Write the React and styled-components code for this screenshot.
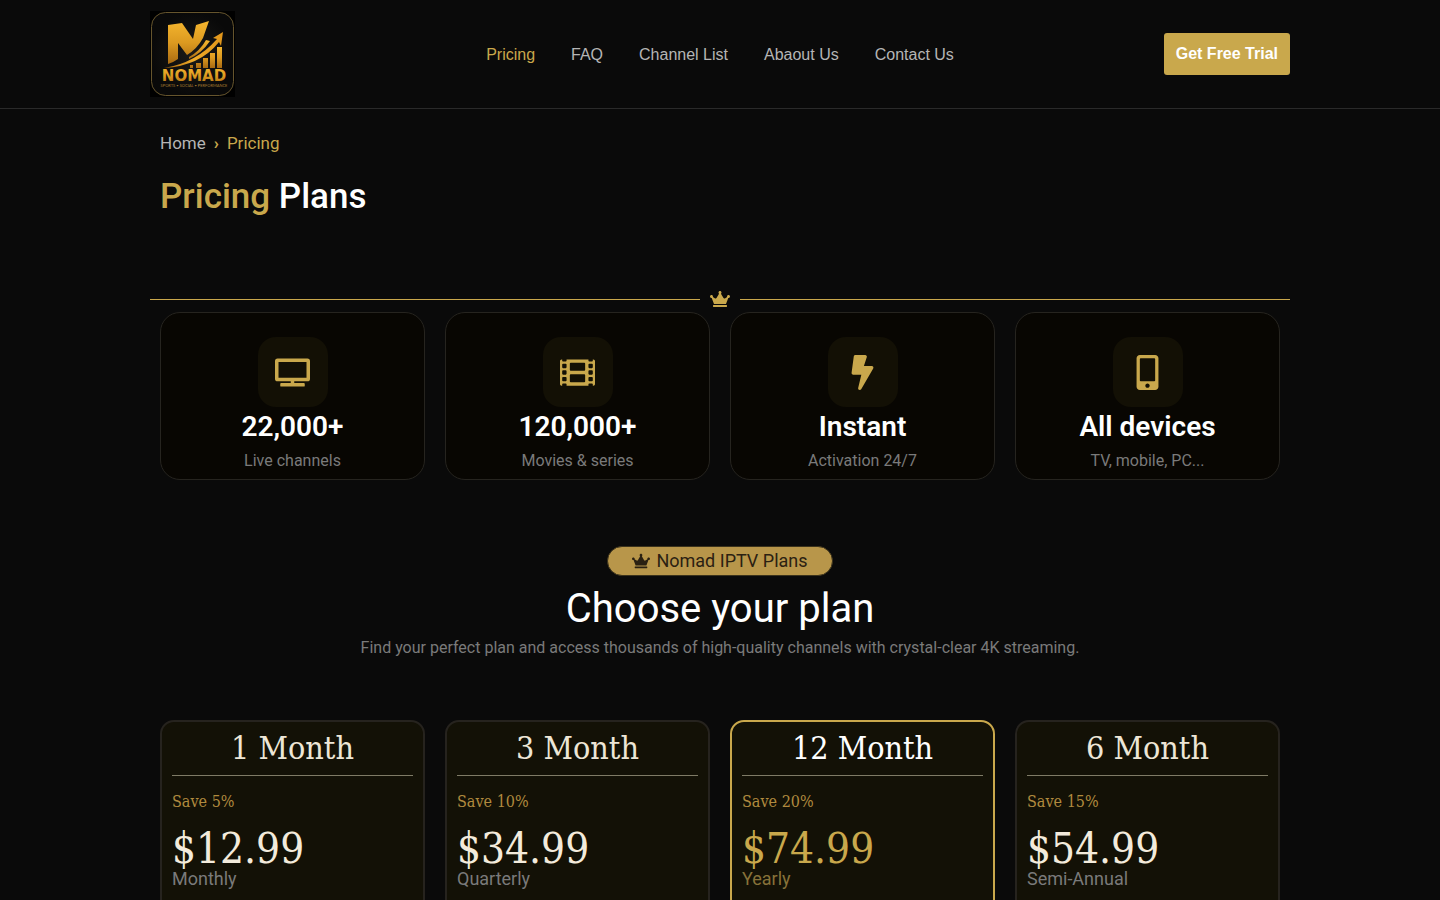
import styled, { createGlobalStyle } from "styled-components";
import { FaBolt, FaCrown, FaFilm, FaMobileAlt, FaTv } from "react-icons/fa";

const GlobalStyle = createGlobalStyle`
  * {
    box-sizing: border-box;
  }
  body {
    margin: 0;
    background: #0a0a0a;
    color: #ffffff;
    font-family: Roboto, "Liberation Sans", sans-serif;
    font-size: 16px;
    overflow-x: hidden;
  }
  h1, h2, h3, p {
    margin: 0;
  }
  a {
    text-decoration: none;
  }
`;

const slab = `"Roboto Slab", "DejaVu Serif Condensed", "DejaVu Serif", serif`;

const links = ["Pricing", "FAQ", "Channel List", "Abaout Us", "Contact Us"];

const features = [
  { icon: FaTv, title: "22,000+", text: "Live channels" },
  { icon: FaFilm, title: "120,000+", text: "Movies & series" },
  { icon: FaBolt, title: "Instant", text: "Activation 24/7" },
  { icon: FaMobileAlt, title: "All devices", text: "TV, mobile, PC..." },
];

const plans = [
  { name: "1 Month", save: "Save 5%", price: "$12.99", period: "Monthly" },
  { name: "3 Month", save: "Save 10%", price: "$34.99", period: "Quarterly" },
  { name: "12 Month", save: "Save 20%", price: "$74.99", period: "Yearly", featured: true },
  { name: "6 Month", save: "Save 15%", price: "$54.99", period: "Semi-Annual" },
];

const Logo = () => (
  <LogoSvg viewBox="0 0 86 86" role="img" aria-label="Nomad">
    <defs>
      <linearGradient id="gold" x1="0" y1="0" x2="0" y2="1">
        <stop offset="0" stopColor="#f4b52e" />
        <stop offset="0.5" stopColor="#dc9a20" />
        <stop offset="1" stopColor="#a86a12" />
      </linearGradient>
      <linearGradient id="sweep" x1="0" y1="0" x2="1" y2="0">
        <stop offset="0" stopColor="#a8650c" />
        <stop offset="0.5" stopColor="#f0ac28" />
        <stop offset="1" stopColor="#e0951a" />
      </linearGradient>
      <radialGradient id="plate">
        <stop offset="0" stopColor="#1b1a18" />
        <stop offset="1" stopColor="#090909" />
      </radialGradient>
    </defs>
    <rect width="85" height="86" fill="#000000" />
    <rect x="1.5" y="1.5" width="82" height="83" rx="14" fill="url(#plate)" stroke="#66552d" />
    <path d="M18 14 L32 12 L43 28 L46 14 L59 10 L53 27 Q47 38 37 44 L28 32 L28 48 Q24 51 18 53 Z" fill="url(#gold)" />
    <path d="M14 57 Q46 52 67 28 L63 27 L73 21 L71 35 L69 31 Q50 55 14 57 Z" fill="url(#sweep)" />
    <path d="M39 46 Q50 40 56 29 L60 30 Q52 42 39 48 Z" fill="url(#gold)" />
    <path d="M40 54 h3 v3 h-3 Z M46 52 h5 v5 h-5 Z M53 47 h5 v10 h-5 Z M60 42 h5 v15 h-5 Z M67 36 h5 v21 h-5 Z" fill="url(#gold)" />
    <LogoName x="44" y="70">NOMAD</LogoName>
    <LogoTag x="44" y="76">SPORTS • SOCIAL • PERFORMANCE</LogoTag>
  </LogoSvg>
);

const App = () => {
  return (
    <>
      <GlobalStyle />
      <Header>
        <HeaderInner>
          <LogoLink href="#">
            <Logo />
          </LogoLink>
          <Nav>
            {links.map((link) => (
              <NavLink key={link} href="#" $active={link === "Pricing"}>
                {link}
              </NavLink>
            ))}
          </Nav>
          <TrialButton>Get Free Trial</TrialButton>
        </HeaderInner>
      </Header>
      <Main>
        <Intro>
          <Breadcrumb>
            <a href="#">Home</a>
            <b>›</b>
            <span>Pricing</span>
          </Breadcrumb>
          <PageTitle>
            <span>Pricing</span> Plans
          </PageTitle>
        </Intro>
        <Divider>
          <FaCrown />
        </Divider>
        <Grid>
          {features.map(({ icon: Icon, title, text }) => (
            <Feature key={title}>
              <IconBox>
                <Icon />
              </IconBox>
              <FeatureTitle>{title}</FeatureTitle>
              <FeatureText>{text}</FeatureText>
            </Feature>
          ))}
        </Grid>
        <PlansHeader>
          <Badge>
            <FaCrown />
            <span>Nomad IPTV Plans</span>
          </Badge>
          <PlansTitle>Choose your plan</PlansTitle>
          <PlansText>
            Find your perfect plan and access thousands of high-quality channels with crystal-clear 4K streaming.
          </PlansText>
        </PlansHeader>
        <Grid>
          {plans.map((plan) => (
            <Plan key={plan.name} $featured={plan.featured}>
              <PlanName $featured={plan.featured}>{plan.name}</PlanName>
              <Save>{plan.save}</Save>
              <Price $featured={plan.featured}>{plan.price}</Price>
              <Period $featured={plan.featured}>{plan.period}</Period>
            </Plan>
          ))}
        </Grid>
      </Main>
    </>
  );
};

export default App;

const Header = styled.header`
  border-bottom: 1px solid #2a2a2a;
  padding: 11px 20px;
`;
const HeaderInner = styled.div`
  display: grid;
  grid-template-columns: 1fr auto 1fr;
  align-items: center;
  max-width: 1140px;
  margin: 0 auto;
`;
const LogoLink = styled.a`
  display: flex;
`;
const LogoSvg = styled.svg`
  width: 86px;
  height: 86px;
`;
const LogoName = styled.text`
  fill: url(#gold);
  font-family: "DejaVu Sans", sans-serif;
  font-size: 15px;
  font-weight: 700;
  text-anchor: middle;
`;
const LogoTag = styled.text`
  fill: #a47a30;
  font-family: Lato, sans-serif;
  font-size: 4px;
  text-anchor: middle;
`;
const Nav = styled.nav`
  display: flex;
  gap: 36px;
  padding-top: 2px;
`;
const NavLink = styled.a`
  color: ${({ $active }) => ($active ? "#c9a84c" : "#b5b5b5")};
  font-family: "Liberation Sans", sans-serif;
  line-height: 24px;
`;
const TrialButton = styled.button`
  justify-self: end;
  height: 42px;
  padding: 0 12px;
  border: none;
  border-radius: 3px;
  background: #c9a84c;
  color: #ffffff;
  font-family: "Liberation Sans", sans-serif;
  font-size: 16px;
  font-weight: 700;
`;
const Main = styled.main`
  max-width: 1140px;
  margin: 0 auto;
`;
const Intro = styled.div`
  padding: 22px 10px 0;
`;
const Breadcrumb = styled.nav`
  display: flex;
  gap: 8px;
  font-size: 17px;
  line-height: 24px;
  color: #c9a84c;
  a {
    color: #b5b5b5;
  }
  b {
    font-weight: 700;
  }
`;
const PageTitle = styled.h1`
  margin-top: 21px;
  font-size: 35px;
  font-weight: 500;
  line-height: 42px;
  span {
    color: #c9a84c;
  }
`;
const Divider = styled.div`
  display: flex;
  align-items: center;
  gap: 10px;
  height: 20px;
  margin-top: 71px;
  color: #c9a84c;
  font-size: 20px;
  &::before,
  &::after {
    content: "";
    flex: 1;
    border-top: 1px solid #c9a84c;
  }
`;
const Grid = styled.div`
  display: grid;
  grid-template-columns: repeat(4, 1fr);
  gap: 20px;
  padding: 3px 10px 0;
`;
const Feature = styled.div`
  display: flex;
  flex-direction: column;
  align-items: center;
  padding: 24px 10px 6px;
  border: 1px solid #26241f;
  border-radius: 20px;
  background: #080602;
`;
const IconBox = styled.div`
  display: flex;
  align-items: center;
  justify-content: center;
  width: 70px;
  height: 70px;
  border-radius: 18px;
  background: #131005;
  color: #c9a84c;
  font-size: 35px;
`;
const FeatureTitle = styled.h3`
  font-size: 28px;
  font-weight: 600;
  line-height: 40px;
`;
const FeatureText = styled.p`
  margin-top: 2px;
  color: #7a7a7a;
  line-height: 24px;
`;
const PlansHeader = styled.div`
  display: flex;
  flex-direction: column;
  align-items: center;
  padding: 66px 10px 57px;
  text-align: center;
`;
const Badge = styled.div`
  display: flex;
  align-items: center;
  gap: 6px;
  height: 30px;
  padding: 0 24px;
  border: 1px solid #3b321b;
  border-radius: 15px;
  background: #b8964a;
  color: #2b2112;
  font-size: 18px;
  span {
    padding-bottom: 2px;
  }
`;
const PlansTitle = styled.h2`
  margin-top: 9px;
  font-size: 40px;
  font-weight: 400;
  line-height: 48px;
`;
const PlansText = styled.p`
  margin-top: 3px;
  color: #7a7a7a;
  line-height: 24px;
`;
const Plan = styled.article`
  padding: 0 10px 400px;
  border: 2px solid ${({ $featured }) => ($featured ? "#c9a84c" : "#26231e")};
  border-radius: 14px;
  background: #131106;
`;
const PlanName = styled.h3`
  border-bottom: 1px solid #7f7b66;
  color: ${({ $featured }) => ($featured ? "#ffffff" : "#ede6d6")};
  font-family: ${slab};
  font-size: 32px;
  font-weight: 400;
  line-height: 53px;
  text-align: center;
`;
const Save = styled.p`
  margin-top: 14px;
  color: #b08a3e;
  font-family: ${slab};
  font-weight: 500;
  line-height: 24px;
`;
const Price = styled.p`
  margin-top: 16px;
  color: ${({ $featured }) => ($featured ? "#c9a84c" : "#f3ebdc")};
  font-family: ${slab};
  font-size: 42px;
  line-height: 37px;
`;
const Period = styled.p`
  color: ${({ $featured }) => ($featured ? "#877239" : "#7a7a7a")};
  font-size: 18px;
  line-height: 24px;
`;
